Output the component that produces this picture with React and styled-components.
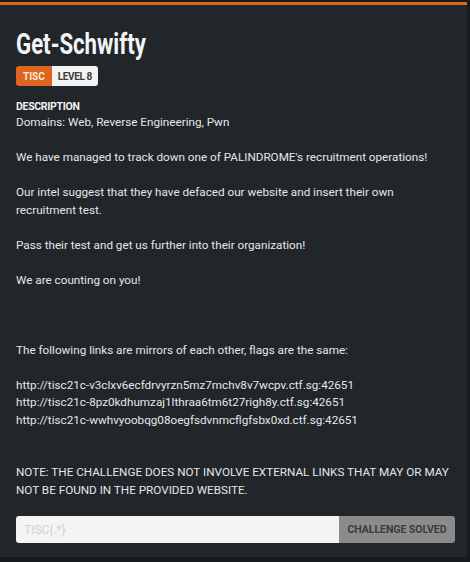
import React from "react";
import styled, { createGlobalStyle } from "styled-components";

const Global = createGlobalStyle`
  html, body { margin: 0; padding: 0; background: #161b1e; }
  body { width: 470px; height: 562px; overflow: hidden; }
  * { box-sizing: border-box; }
`;

const headFont = `Roboto, "Liberation Sans", sans-serif`;

const Page = styled.div`
  padding: 2px 3px 0 0;
`;

const Card = styled.div`
  width: 467px;
  height: 555px;
  background: #20262a;
  border-top: 3px solid #e0661d;
  padding: 19px 14px 0 16px;
  display: flex;
  flex-direction: column;
  align-items: flex-start;
  font-family: Roboto, "Liberation Sans", sans-serif;
  color: #e8e8e8;
`;

const Title = styled.h1`
  margin: 0;
  font-family: ${headFont};
  font-weight: 700;
  font-size: 30px;
  line-height: 40px;
  color: #f4f4f4;
  white-space: nowrap;
  transform: scaleX(0.74);
  transform-origin: left center;
`;

const Badges = styled.div`
  display: flex;
  margin-top: 2px;
  height: 20px;
`;

const Badge = styled.span`
  display: flex;
  align-items: center;
  padding: 0 ${(p) => (p.$accent ? "7px" : "6px")};
  font-family: ${headFont};
  font-weight: 700;
  font-size: 10px;
  letter-spacing: ${(p) => (p.$accent ? "0" : "-0.4px")};
  background: ${(p) => (p.$accent ? "#de6520" : "#f3f3f3")};
  color: ${(p) => (p.$accent ? "#fbe8dc" : "#3b3b3b")};
  border-radius: ${(p) => (p.$accent ? "3px 0 0 3px" : "0 3px 3px 0")};
`;

const Heading = styled.div`
  margin-top: 13px;
  font-family: ${headFont};
  font-weight: 700;
  font-size: 10.5px;
  letter-spacing: -0.3px;
  line-height: 15px;
  color: #f2f2f2;
`;

const Body = styled.div`
  font-size: 11.7px;
  line-height: 17.5px;
  color: #e6e6e6;
  white-space: pre-wrap;
  width: 440px;
`;

const Form = styled.div`
  display: flex;
  margin-top: 17px;
  width: 439px;
  height: 27px;
`;

const Input = styled.input`
  flex: 1;
  min-width: 0;
  border: none;
  outline: none;
  background: #f4f4f4;
  border-radius: 3px 0 0 3px;
  padding: 0 8px;
  font-family: Roboto, "Liberation Sans", sans-serif;
  font-size: 12px;
  color: #333;
  &::placeholder { color: #d2d2d2; }
`;

const Button = styled.button`
  width: 116px;
  border: none;
  background: #8b8b8b;
  border-radius: 0 3px 3px 0;
  font-family: ${headFont};
  font-weight: 700;
  font-size: 10.6px;
  letter-spacing: -0.1px;
  white-space: nowrap;
  color: #3c3c3c;
  padding: 0;
`;

const text = `Domains: Web, Reverse Engineering, Pwn

We have managed to track down one of PALINDROME's recruitment operations!

Our intel suggest that they have defaced our website and insert their own recruitment test.

Pass their test and get us further into their organization!

We are counting on you!



The following links are mirrors of each other, flags are the same:

http://tisc21c-v3clxv6ecfdrvyrzn5mz7mchv8v7wcpv.ctf.sg:42651
http://tisc21c-8pz0kdhumzaj1lthraa6tm6t27righ8y.ctf.sg:42651
http://tisc21c-wwhvyoobqg08oegfsdvnmcflgfsbx0xd.ctf.sg:42651


NOTE: THE CHALLENGE DOES NOT INVOLVE EXTERNAL LINKS THAT MAY OR MAY NOT BE FOUND IN THE PROVIDED WEBSITE.`;

export default function App() {
  return (
    <Page>
      <Global />
      <Card>
        <Title>Get-Schwifty</Title>
        <Badges>
          <Badge $accent>TISC</Badge>
          <Badge>LEVEL 8</Badge>
        </Badges>
        <Heading>DESCRIPTION</Heading>
        <Body>{text}</Body>
        <Form>
          <Input placeholder="TISC{.*}" />
          <Button>CHALLENGE SOLVED</Button>
        </Form>
      </Card>
    </Page>
  );
}
